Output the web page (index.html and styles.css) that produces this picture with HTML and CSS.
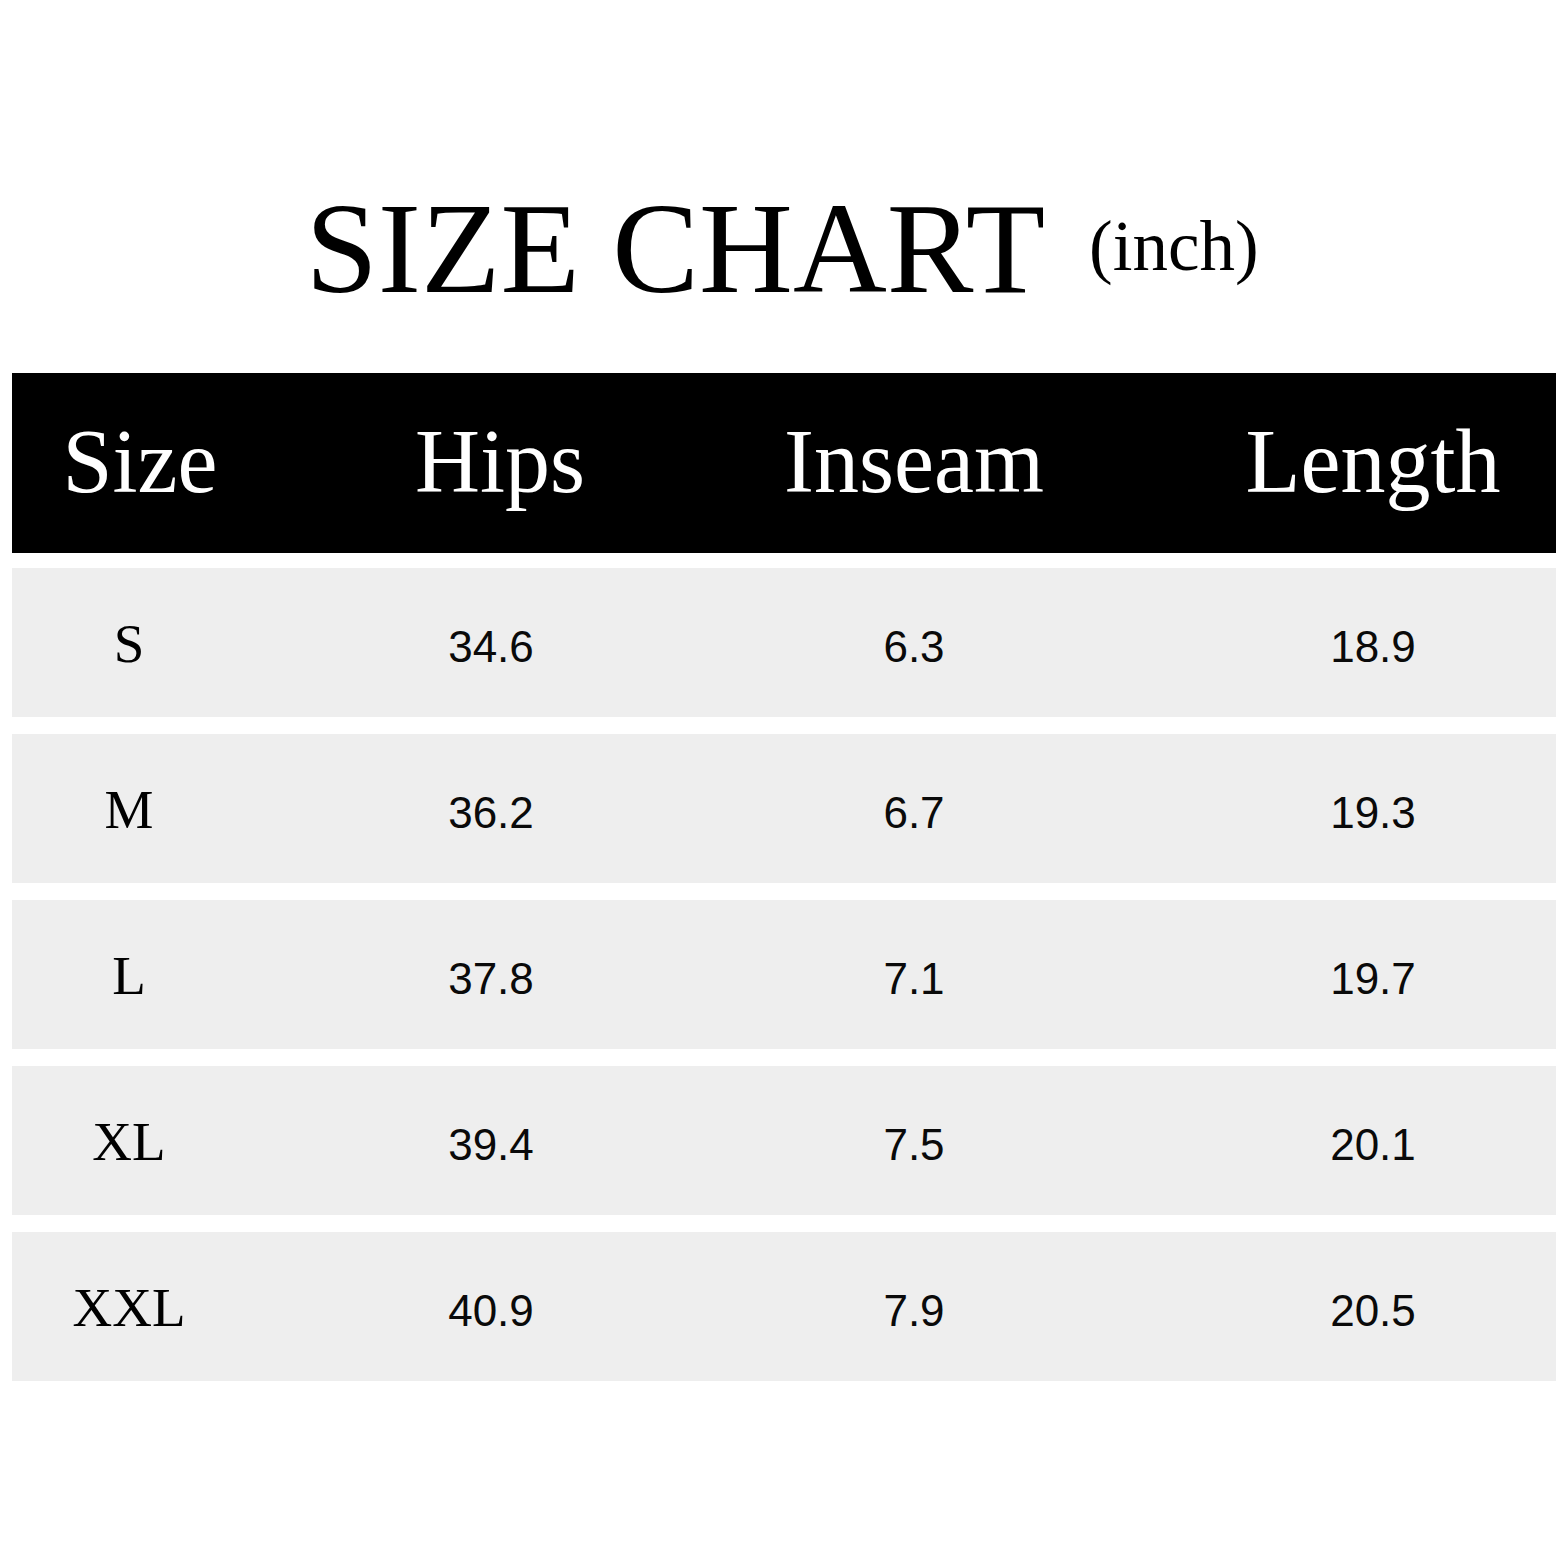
FILE: index.html
```html
<!DOCTYPE html>
<html lang="en">
<head>
<meta charset="utf-8">
<title>Size Chart</title>
<link rel="stylesheet" href="styles.css">
</head>
<body>
<main class="page">
  <h1 class="title">SIZE CHART<span class="unit">(inch)</span></h1>
  <div class="table">
    <div class="head">
      <div class="cell c1">Size</div>
      <div class="cell c2">Hips</div>
      <div class="cell c3">Inseam</div>
      <div class="cell c4">Length</div>
    </div>
    <div class="row">
      <div class="cell c1 size">S</div>
      <div class="cell c2 num">34.6</div>
      <div class="cell c3 num">6.3</div>
      <div class="cell c4 num">18.9</div>
    </div>
    <div class="row">
      <div class="cell c1 size">M</div>
      <div class="cell c2 num">36.2</div>
      <div class="cell c3 num">6.7</div>
      <div class="cell c4 num">19.3</div>
    </div>
    <div class="row">
      <div class="cell c1 size">L</div>
      <div class="cell c2 num">37.8</div>
      <div class="cell c3 num">7.1</div>
      <div class="cell c4 num">19.7</div>
    </div>
    <div class="row">
      <div class="cell c1 size">XL</div>
      <div class="cell c2 num">39.4</div>
      <div class="cell c3 num">7.5</div>
      <div class="cell c4 num">20.1</div>
    </div>
    <div class="row">
      <div class="cell c1 size">XXL</div>
      <div class="cell c2 num">40.9</div>
      <div class="cell c3 num">7.9</div>
      <div class="cell c4 num">20.5</div>
    </div>
  </div>
</main>
</body>
</html>
```

FILE: styles.css
```css
html, body {
  margin: 0;
  padding: 0;
  background: #ffffff;
}

.page {
  padding: 184px 12px 0;
  font-family: "Liberation Serif", "Times New Roman", serif;
  color: #000;
}

.title {
  margin: 0;
  padding-right: 4px;
  font-size: 130px;
  font-weight: normal;
  line-height: 128px;
  text-align: center;
  white-space: nowrap;
}

.unit {
  display: inline-block;
  margin-left: 44px;
  font-size: 71px;
  line-height: 1;
  vertical-align: 22px;
}

.table {
  margin-top: 61px;
  display: flex;
  flex-direction: column;
  gap: 17px;
}

.head,
.row {
  display: grid;
  grid-template-columns: 256px 464px 364px 1fr;
  align-items: baseline;
}

.head {
  height: 180px;
  box-sizing: border-box;
  padding-top: 39px;
  background: #000;
  color: #fff;
  font-size: 90px;
  line-height: 100px;
  margin-bottom: -2px;
}

.row {
  height: 149px;
  box-sizing: border-box;
  padding-top: 46px;
  background: #eeeeee;
  line-height: 60px;
}

.cell {
  text-align: center;
  white-space: nowrap;
}

.c4 {
  padding-left: 94px;
}

.row .c1 {
  padding-right: 22px;
}

.row .c2 {
  padding-right: 18px;
}

.size {
  font-family: "Liberation Serif", "Times New Roman", serif;
  font-size: 55px;
}

.num {
  font-family: "Liberation Sans", Arial, sans-serif;
  font-size: 44px;
  color: #0a0a0a;
}
```
